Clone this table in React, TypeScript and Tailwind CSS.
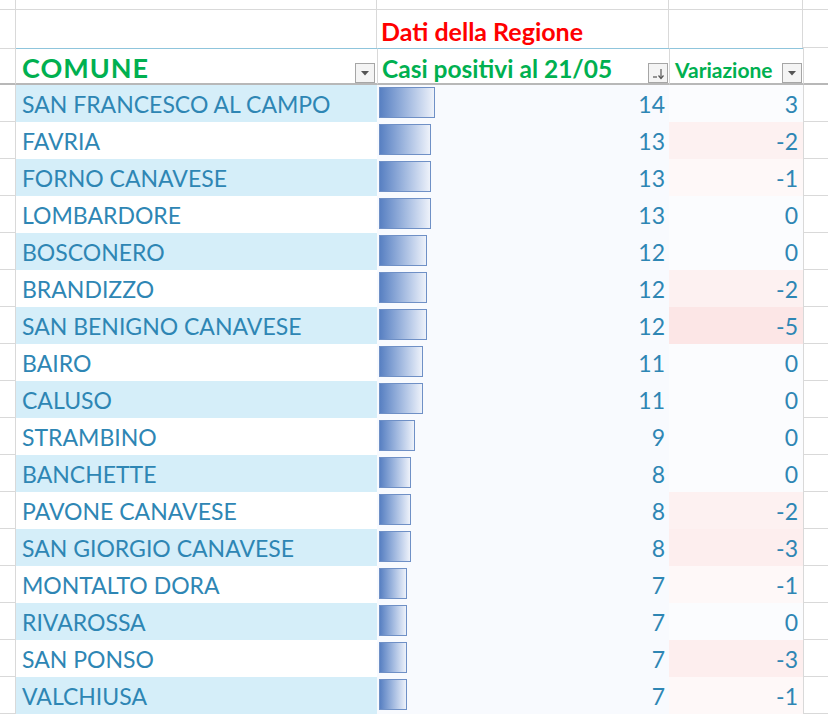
import React from 'react'

type Riga = { comune: string; casi: number; variazione: number }

const righe: Riga[] = [
  { comune: 'SAN FRANCESCO AL CAMPO', casi: 14, variazione: 3 },
  { comune: 'FAVRIA', casi: 13, variazione: -2 },
  { comune: 'FORNO CANAVESE', casi: 13, variazione: -1 },
  { comune: 'LOMBARDORE', casi: 13, variazione: 0 },
  { comune: 'BOSCONERO', casi: 12, variazione: 0 },
  { comune: 'BRANDIZZO', casi: 12, variazione: -2 },
  { comune: 'SAN BENIGNO CANAVESE', casi: 12, variazione: -5 },
  { comune: 'BAIRO', casi: 11, variazione: 0 },
  { comune: 'CALUSO', casi: 11, variazione: 0 },
  { comune: 'STRAMBINO', casi: 9, variazione: 0 },
  { comune: 'BANCHETTE', casi: 8, variazione: 0 },
  { comune: 'PAVONE CANAVESE', casi: 8, variazione: -2 },
  { comune: 'SAN GIORGIO CANAVESE', casi: 8, variazione: -3 },
  { comune: 'MONTALTO DORA', casi: 7, variazione: -1 },
  { comune: 'RIVAROSSA', casi: 7, variazione: 0 },
  { comune: 'SAN PONSO', casi: 7, variazione: -3 },
  { comune: 'VALCHIUSA', casi: 7, variazione: -1 },
]

// scala colori tipo formattazione condizionale di Excel
const sfondoVariazione: Record<number, string> = {
  [-5]: 'bg-[#fce6e6]',
  [-3]: 'bg-[#fdeeee]',
  [-2]: 'bg-[#fdf1f1]',
  [-1]: 'bg-[#fef8f8]',
}

const larghezzaBarra: Record<number, string> = {
  14: 'w-[56px]',
  13: 'w-[52px]',
  12: 'w-[48px]',
  11: 'w-[44px]',
  9: 'w-[36px]',
  8: 'w-[32px]',
  7: 'w-[28px]',
}

const grid = 'border-[#d9d9d9]'

function FiltroBtn({ sort }: { sort?: boolean }) {
  return (
    <div className="w-[20px] h-[20px] border border-[#a6a6a6] bg-[#f4f4f4] flex items-center justify-center shrink-0">
      {sort ? (
        <svg width="14" height="14" viewBox="0 0 14 14">
          <line x1="2" y1="11" x2="6" y2="11" stroke="#555" strokeWidth="1.2" />
          <line x1="10" y1="3" x2="10" y2="12" stroke="#555" strokeWidth="1.2" />
          <path d="M7.5 9.5 L10 12.5 L12.5 9.5" fill="none" stroke="#555" strokeWidth="1.2" />
        </svg>
      ) : (
        <svg width="10" height="6" viewBox="0 0 10 6">
          <path d="M1 1 L9 1 L5 5.5 Z" fill="#555" />
        </svg>
      )}
    </div>
  )
}

export default function App() {
  return (
    <div className="w-[828px] h-[714px] overflow-hidden bg-white font-['Lato',sans-serif]">
      <div className="grid grid-cols-[16px_361px_292px_134px_1fr]">
        {/* riga tagliata in alto */}
        <div className={`h-[10px] border-r border-b ${grid}`} />
        <div className={`h-[10px] border-r border-b ${grid}`} />
        <div className={`h-[10px] border-r border-b ${grid}`} />
        <div className={`h-[10px] border-r border-b ${grid}`} />
        <div className={`h-[10px] border-b ${grid}`} />

        {/* Dati della Regione */}
        <div className={`h-[38px] border-r ${grid}`} />
        <div className={`h-[38px] border-r ${grid}`} />
        <div className={`h-[38px] border-r ${grid} flex items-end pl-[4px] pb-[4px]`}>
          <span className="text-[25px] font-bold text-[#ff0000] leading-none">Dati della Regione</span>
        </div>
        <div className={`h-[38px] border-r ${grid}`} />
        <div className={`h-[38px] border-b ${grid}`} />

        {/* intestazione tabella */}
        <div className={`h-[37px] border-t border-r border-b-2 ${grid} border-b-[#b8b8b8]`} />
        <div className="h-[37px] border-t border-t-[#8fc5dc] border-b-2 border-b-[#b8b8b8] flex items-end justify-between pl-[6px] pr-[2px]">
          <span className="text-[27px] font-bold text-[#00b050] leading-none pb-[2px] tracking-[1px]">COMUNE</span>
          <FiltroBtn />
        </div>
        <div className={`h-[37px] border-t border-t-[#8fc5dc] border-l ${grid} border-b-2 border-b-[#b8b8b8] flex items-end justify-between pl-[4px] pr-[1px]`}>
          <span className="text-[24.5px] font-bold text-[#00b050] leading-none pb-[2px]">Casi positivi al 21/05</span>
          <FiltroBtn sort />
        </div>
        <div className={`h-[37px] border-t border-t-[#8fc5dc] border-l ${grid} border-b-2 border-b-[#b8b8b8] flex items-end justify-between pl-[5px] pr-[1px]`}>
          <span className="text-[21px] font-bold text-[#00b050] leading-none pb-[3px]">Variazione</span>
          <FiltroBtn />
        </div>
        <div className={`h-[37px] border-l ${grid} border-b-2 border-b-[#b8b8b8]`} />

        {righe.map((r, i) => (
          <React.Fragment key={r.comune}>
            <div className={`h-[37px] border-r border-b ${grid}`} />
            <div
              className={`h-[37px] flex items-end pl-[6px] pb-[6px] text-[23px] leading-none text-[#2e86b4] ${
                i % 2 === 0 ? 'bg-[#d5eef9]' : 'bg-white'
              }`}
            >
              {r.comune}
            </div>
            <div className="h-[37px] bg-[#f8fafe] flex items-start justify-between pl-[2px] pr-[4px]">
              <div
                className={`${larghezzaBarra[r.casi]} h-[31px] mt-[2px] border border-[#6f90c6] bg-gradient-to-r from-[#5880c2] to-[#eef2fa]`}
              />
              <span className="self-end pb-[6px] text-[23px] leading-none text-[#2e86b4]">{r.casi}</span>
            </div>
            <div
              className={`h-[37px] flex items-end justify-end pr-[5px] pb-[6px] text-[23px] leading-none text-[#2e86b4] ${
                sfondoVariazione[r.variazione] ?? 'bg-[#fbfcfe]'
              }`}
            >
              {r.variazione}
            </div>
            <div className={`h-[37px] border-l border-b ${grid}`} />
          </React.Fragment>
        ))}
      </div>
    </div>
  )
}
